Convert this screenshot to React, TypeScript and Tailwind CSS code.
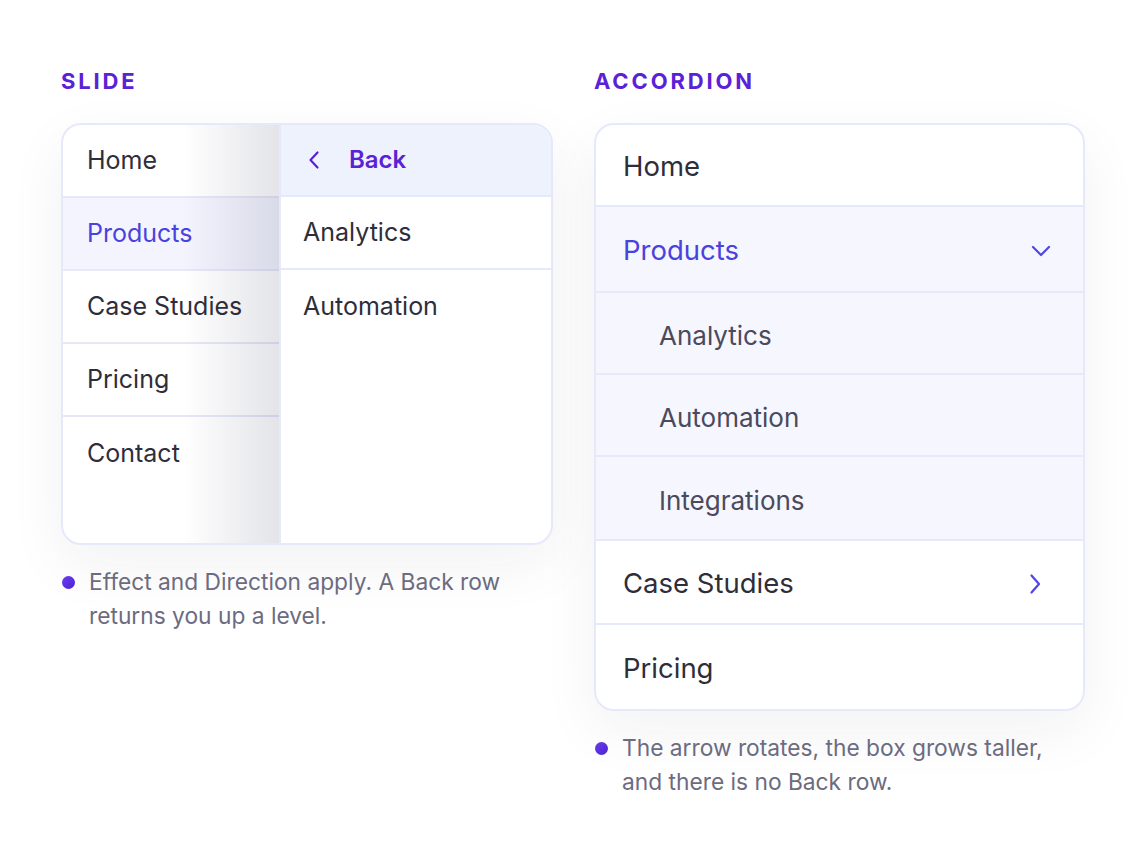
import React from "react";

const font = { fontFamily: "Inter, 'Noto Sans', sans-serif" };

const ChevronLeft = () => (
  <svg width="12" height="20" viewBox="0 0 12 20" fill="none">
    <path d="M9.5 2.5 2.5 10l7 7.5" stroke="#5b21d6" strokeWidth="2.2" strokeLinecap="round" strokeLinejoin="round" />
  </svg>
);

const ChevronDown = () => (
  <svg width="20" height="12" viewBox="0 0 20 12" fill="none">
    <path d="M2 2l8 8 8-8" stroke="#4f46e5" strokeWidth="2.2" strokeLinecap="round" strokeLinejoin="round" />
  </svg>
);

const ChevronRight = () => (
  <svg width="12" height="22" viewBox="0 0 12 22" fill="none">
    <path d="M2.5 2.5l7.5 8.5-7.5 8.5" stroke="#4f46e5" strokeWidth="2.2" strokeLinecap="round" strokeLinejoin="round" />
  </svg>
);

const Note = ({ children }: { children: React.ReactNode }) => (
  <div className="mt-[20px] flex gap-[14px] pl-[1px]">
    <span className="mt-[11px] size-[13px] shrink-0 rounded-full bg-gradient-to-br from-[#6a3cf0] to-[#4c22d2]" />
    <p className="text-[22.75px] leading-[34px] text-[#6c6b80]">{children}</p>
  </div>
);

const Label = ({ children }: { children: React.ReactNode }) => (
  <h2 className="text-[22px] font-bold leading-none tracking-[0.13em] text-[#5b21d6]">{children}</h2>
);

const slideItems = ["Home", "Products", "Case Studies", "Pricing", "Contact"];

const SlideMenu = () => (
  <div className="flex h-[422px] overflow-hidden rounded-[20px] border-2 border-[#e6e9fb] bg-white shadow-[0_20px_60px_rgba(30,30,70,0.06)]">
    <div className="relative w-[216px] shrink-0">
      {slideItems.map((item, i) => (
        <div
          key={item}
          className={
            "flex h-[73px] items-center border-[#e6e8f8] pl-[24px] text-[25px] " +
            (i < slideItems.length - 1 ? "border-b-2 " : "") +
            (item === "Products" ? "bg-[#f3f4fe] text-[#4a42dc]" : "text-[#2e2e3b]")
          }
        >
          {item}
        </div>
      ))}
      <div className="pointer-events-none absolute inset-y-0 right-0 w-[96px] bg-gradient-to-r from-transparent to-[rgba(28,32,70,0.12)]" />
    </div>
    <div className="flex-1 border-l-2 border-[#e6e9fb]">
      <div className="flex h-[72px] items-center gap-[29px] border-b-2 border-[#e6e9fb] bg-[#eef2fc] pl-[27px] text-[24px] font-semibold text-[#5b21d6]">
        <ChevronLeft />
        <span>Back</span>
      </div>
      {["Analytics", "Automation"].map((item, i) => (
        <div
          key={item}
          className={
            "flex h-[73px] items-center pl-[22px] text-[25px] text-[#2e2e3b] " +
            (i === 0 ? "border-b-2 border-[#e6e9fb]" : "")
          }
        >
          {item}
        </div>
      ))}
    </div>
  </div>
);

type Row = { label: string; h: string; sub?: boolean; active?: boolean; icon?: "down" | "right" };

const accordionRows: Row[] = [
  { label: "Home", h: "h-[82px]" },
  { label: "Products", h: "h-[86px]", active: true, icon: "down" },
  { label: "Analytics", h: "h-[82px]", sub: true },
  { label: "Automation", h: "h-[82px]", sub: true },
  { label: "Integrations", h: "h-[84px]", sub: true },
  { label: "Case Studies", h: "h-[84px]", icon: "right" },
  { label: "Pricing", h: "h-[84px]" },
];

const AccordionMenu = () => (
  <div className="overflow-hidden rounded-[20px] border-2 border-[#e6e9fb] bg-white shadow-[0_20px_60px_rgba(30,30,70,0.06)]">
    {accordionRows.map((row, i) => (
      <div
        key={row.label}
        className={
          "flex items-center justify-between border-[#e6e9fb] pt-[4px] " +
          row.h +
          " " +
          (i < accordionRows.length - 1 ? "border-b-2 " : "") +
          (row.sub
            ? "bg-[#f5f6fe] pl-[63px] text-[26px] text-[#4a4a5c] "
            : row.active
              ? "bg-[#f5f6fe] pl-[27px] text-[27.5px] text-[#4a42dc] "
              : "pl-[27px] text-[27.5px] text-[#2e2e3b] ") +
          (row.icon === "right" ? "pr-[42px]" : "pr-[32px]")
        }
      >
        <span>{row.label}</span>
        {row.icon === "down" && <ChevronDown />}
        {row.icon === "right" && <ChevronRight />}
      </div>
    ))}
  </div>
);

export default function App() {
  return (
    <div className="min-h-screen bg-white" style={font}>
      <div className="flex gap-[41px] pl-[61px] pt-[70px]">
        <section className="w-[492px]">
          <Label>SLIDE</Label>
          <div className="mt-[31px]">
            <SlideMenu />
          </div>
          <Note>
            Effect and Direction apply. A Back row returns you up a level.
          </Note>
        </section>
        <section className="w-[491px]">
          <Label>ACCORDION</Label>
          <div className="mt-[31px]">
            <AccordionMenu />
          </div>
          <Note>The arrow rotates, the box grows taller, and there is no Back row.</Note>
        </section>
      </div>
    </div>
  );
}
